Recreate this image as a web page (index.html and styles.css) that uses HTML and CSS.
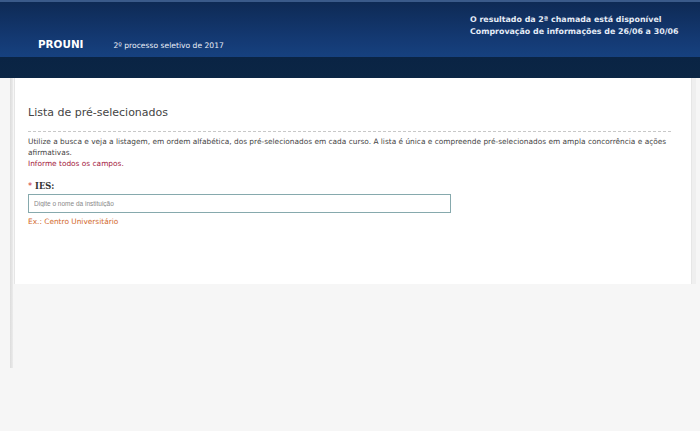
FILE: index.html
```html
<!DOCTYPE html>
<html lang="pt-BR">
<head>
<meta charset="utf-8">
<title>PROUNI - Lista de pré-selecionados</title>
<link rel="stylesheet" href="styles.css">
</head>
<body>
<header class="top">
  <div class="brand-row">
    <div class="brand">
      <span class="logo">PROUNI</span>
      <span class="edition">2º processo seletivo de 2017</span>
    </div>
    <div class="notice">
      <div>O resultado da 2ª chamada está disponível</div>
      <div>Comprovação de informações de 26/06 a 30/06</div>
    </div>
  </div>
  <div class="band"></div>
</header>
<div class="page">
  <main class="panel">
    <h1 class="title">Lista de pré-selecionados</h1>
    <p class="intro">Utilize a busca e veja a listagem, em ordem alfabética, dos pré-selecionados em cada curso. A lista é única e compreende pré-selecionados em ampla concorrência e ações afirmativas.</p>
    <p class="warn">Informe todos os campos.</p>
    <div class="field">
      <label class="label"><span class="req">*</span> IES:</label>
      <input class="input" type="text" placeholder="Digite o nome da instituição">
      <div class="hint">Ex.: Centro Universitário</div>
    </div>
  </main>
</div>
</body>
</html>
```
FILE: styles.css
```css
html, body { margin: 0; padding: 0; }
body {
  background: #f6f6f6;
  font-family: "DejaVu Sans", Verdana, sans-serif;
  height: 431px;
  overflow: hidden;
}
.top { display: block; }
.brand-row {
  height: 57px;
  background: linear-gradient(180deg, #0e2a55 0%, #143a74 70%, #16417f 100%);
  border-top: 2px solid #3a5a8a;
  box-sizing: border-box;
  display: flex;
  justify-content: space-between;
  align-items: flex-start;
  color: #fff;
}
.brand {
  display: flex;
  align-items: baseline;
  padding: 36px 0 0 38px;
}
.logo {
  font-weight: bold;
  font-size: 10.4px;
}
.edition {
  font-size: 7.6px;
  margin-left: 30px;
  color: #e8eef8;
}
.notice {
  padding: 12px 0 0 0;
  width: 230px;
  font-size: 7.9px;
  font-weight: bold;
  line-height: 12px;
  color: #e4ebf6;
  white-space: nowrap;
}
.band {
  height: 21px;
  background: linear-gradient(180deg, #0a2444 0%, #0b2645 100%);
}
.page {
  padding: 0 8px 0 14px;
  height: 353px;
  box-sizing: border-box;
  background:
    linear-gradient(90deg, transparent 10px, #dcdcdc 10px, #ececec 13px, transparent 13px) left top / 16px 290px no-repeat,
    #f6f6f6;
}
.panel {
  background: #fff;
  height: 206px;
  box-sizing: border-box;
  padding: 26px 20px 0 13px;
  border-left: 1px solid #e6e6e6;
  border-right: 1px solid #e6e6e6;
  box-shadow: 4px 0 0 #efefef;
}
.title {
  margin: 0;
  font-weight: normal;
  font-size: 11px;
  color: #444;
  padding-bottom: 9px;
  border-bottom: 1px dashed #c8c8c8;
  line-height: 18px;
}
.intro {
  margin: 4px 0 0;
  font-size: 7.4px;
  line-height: 11px;
  color: #444;
}
.warn {
  margin: 0;
  font-size: 7.4px;
  line-height: 11px;
  color: #a3173c;
}
.field { margin-top: 12px; }
.label {
  display: block;
  font-family: "DejaVu Serif", "Liberation Serif", serif;
  font-weight: bold;
  font-size: 8.3px;
  color: #333;
  line-height: 11px;
}
.req { color: #c33; font-family: "DejaVu Sans", sans-serif; font-weight: normal; }
.input {
  display: block;
  margin-top: 2px;
  width: 423px;
  height: 19px;
  box-sizing: border-box;
  border: 1px solid #86a9ad;
  padding: 0 5px;
  font-family: "Liberation Sans", Arial, sans-serif;
  font-size: 6.5px;
  color: #555;
  background: #fff;
  outline: none;
}
.input::placeholder { color: #888; }
.hint {
  margin-top: 3px;
  font-size: 7.4px;
  color: #d2692b;
  line-height: 11px;
}
```
